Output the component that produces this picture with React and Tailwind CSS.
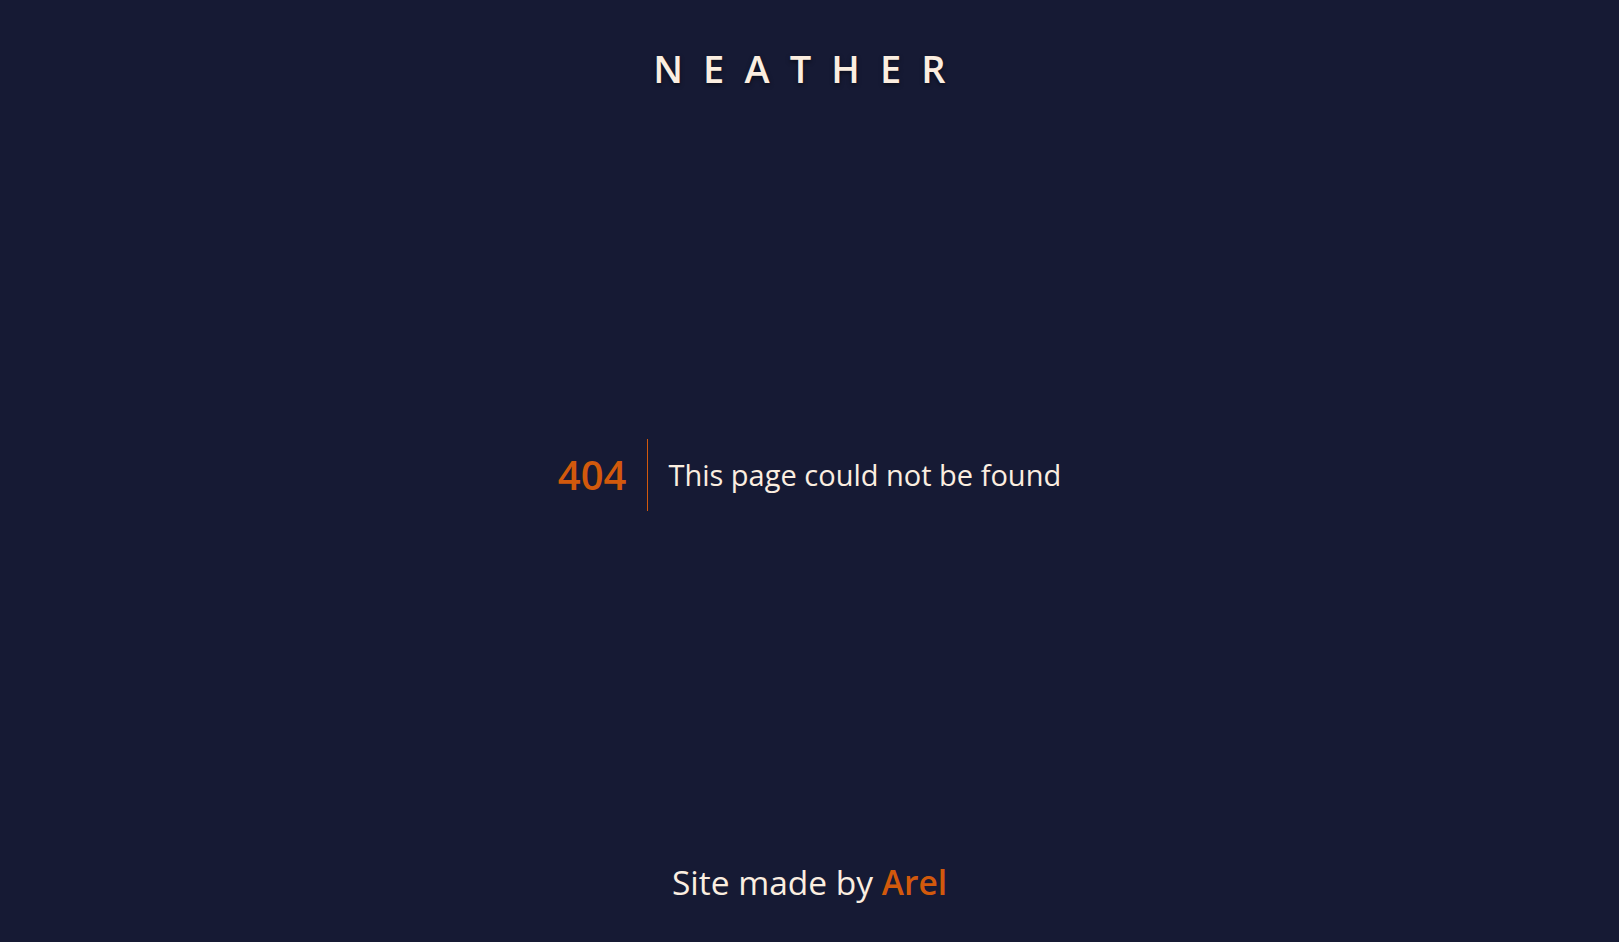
import React from "react";

const App = () => {
  return (
    <div
      className="min-h-screen flex flex-col bg-[#161a34] text-[#fbeee0]"
      style={{ fontFamily: '"Open Sans", "Noto Sans", sans-serif' }}
    >
      <header className="pt-[43px] flex justify-center">
        <h1 className="text-[38px] leading-[50px] font-semibold tracking-[0.53em] [text-shadow:0_2px_4px_rgba(0,0,0,0.5)]">
          NEATHER
        </h1>
      </header>

      <main className="flex-1 flex items-center justify-center pb-[4px]">
        <div className="flex items-center">
          <h2 className="text-[40px] font-semibold text-[#d2590c] pr-[21px] mr-[20px] border-r border-[#d2590c] leading-[72px]">
            404
          </h2>
          <p className="text-[29px] leading-[40px]">This page could not be found</p>
        </div>
      </main>

      <footer className="pb-[38px] flex justify-center">
        <p className="text-[33.5px] leading-[44px]">
          Site made by <span className="font-semibold text-[#d2590c]">Arel</span>
        </p>
      </footer>
    </div>
  );
};

export default App;
